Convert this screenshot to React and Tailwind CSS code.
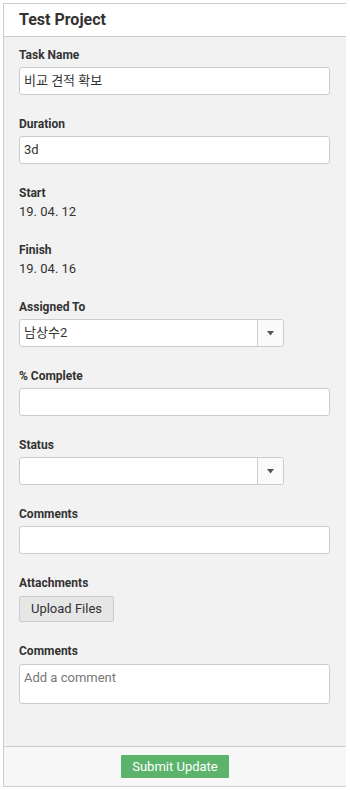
import React from "react";

const font = { fontFamily: 'Roboto, "Noto Sans CJK KR", sans-serif' };

function Label({ children }) {
  return <div className="text-[12px] leading-[18px] font-bold text-[#333]">{children}</div>;
}

function TextInput({ value, w = "w-[311px]" }) {
  return (
    <div className={`${w} h-[28px] mt-[3px] bg-white border border-[#ccc] rounded-[3px] px-[4px] flex items-center text-[13px] text-[#333]`}>
      {value}
    </div>
  );
}

function Select({ value }) {
  return (
    <div className="w-[265px] h-[28px] mt-[3px] bg-white border border-[#ccc] rounded-[3px] flex items-stretch text-[13px] text-[#333]">
      <div className="flex-1 px-[4px] flex items-center">{value}</div>
      <div className="w-[26px] border-l border-[#ccc] bg-[#fafafa] rounded-r-[3px] flex items-center justify-center">
        <svg width="7" height="5" viewBox="0 0 7 5">
          <polygon points="0,0 7,0 3.5,4.5" fill="#555" />
        </svg>
      </div>
    </div>
  );
}

function Static({ label, value }) {
  return (
    <div>
      <Label>{label}</Label>
      <div className="text-[13px] leading-[19px] text-[#333]">{value}</div>
    </div>
  );
}

export default function App() {
  return (
    <div style={font} className="bg-white w-[350px] h-[790px] pt-[3px] pl-[3px]">
      <div className="w-[343px] h-[784px] border-l border-t border-b border-[#ccc] flex flex-col">
        <div className="h-[33px] bg-white border-b border-[#ccc] pl-[15px] flex items-center">
          <span className="text-[16px] font-bold text-[#333]">Test Project</span>
        </div>
        <div className="flex-1 bg-[#f2f2f2] pl-[15px] pt-[9px] flex flex-col gap-[20px]">
          <div>
            <Label>Task Name</Label>
            <TextInput value="비교 견적 확보" />
          </div>
          <div>
            <Label>Duration</Label>
            <TextInput value="3d" />
          </div>
          <Static label="Start" value="19. 04. 12" />
          <Static label="Finish" value="19. 04. 16" />
          <div>
            <Label>Assigned To</Label>
            <Select value="남상수2" />
          </div>
          <div>
            <Label>% Complete</Label>
            <TextInput value="" />
          </div>
          <div>
            <Label>Status</Label>
            <Select value="" />
          </div>
          <div>
            <Label>Comments</Label>
            <TextInput value="" />
          </div>
          <div>
            <Label>Attachments</Label>
            <div className="mt-[4px] w-[95px] h-[26px] bg-[#e6e6e6] border border-[#ccc] rounded-[2px] flex items-center justify-center text-[13px] text-[#333]">
              Upload Files
            </div>
          </div>
          <div>
            <Label>Comments</Label>
            <div className="w-[311px] h-[40px] mt-[4px] bg-white border border-[#ccc] rounded-[3px] px-[4px] pt-[4px] text-[13px] leading-[18px] text-[#777]">
              Add a comment
            </div>
          </div>
        </div>
        <div className="h-[40px] bg-[#f7f7f7] border-t border-[#ccc] flex items-center justify-center">
          <div className="w-[108px] h-[23px] bg-[#5cb46c] rounded-[1px] flex items-center justify-center text-[13px] text-white">
            Submit Update
          </div>
        </div>
      </div>
    </div>
  );
}
